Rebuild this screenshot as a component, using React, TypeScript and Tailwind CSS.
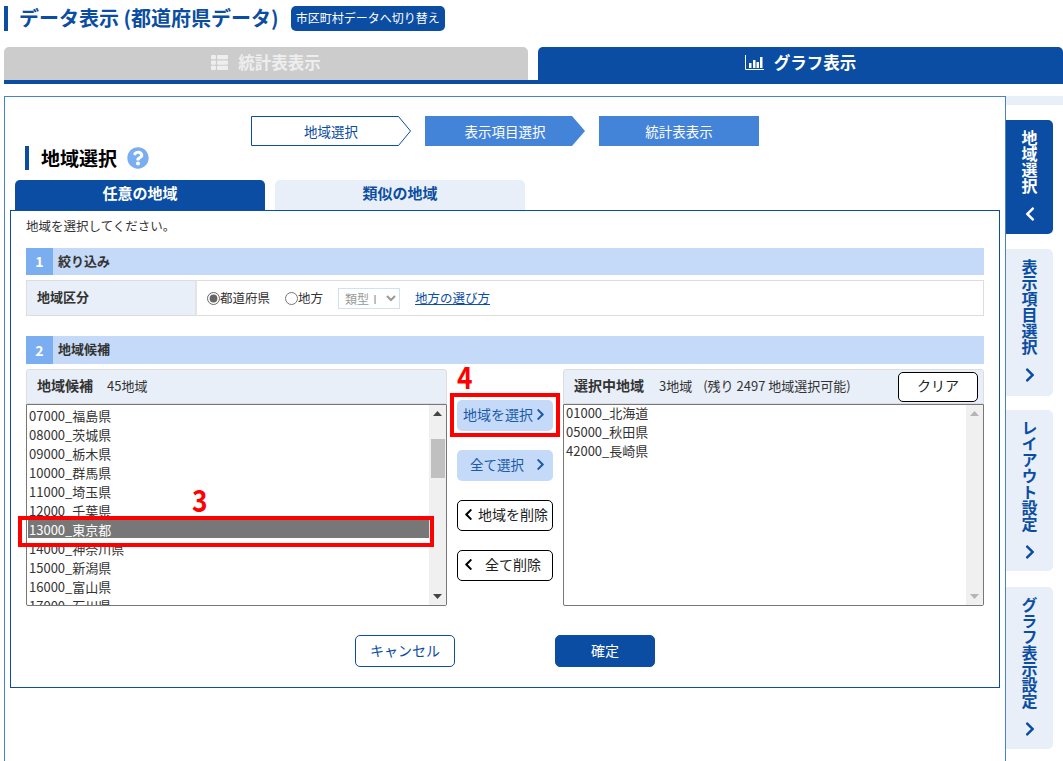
import { FaChevronLeft, FaChevronRight, FaQuestionCircle, FaThList } from "react-icons/fa";

const prefectures = [
  "07000_福島県",
  "08000_茨城県",
  "09000_栃木県",
  "10000_群馬県",
  "11000_埼玉県",
  "12000_千葉県",
  "13000_東京都",
  "14000_神奈川県",
  "15000_新潟県",
  "16000_富山県",
  "17000_石川県",
];

const selected = ["01000_北海道", "05000_秋田県", "42000_長崎県"];

const sideTabs = [
  { label: "地域選択", height: "h-[114px] mt-[15px]", active: true },
  { label: "表示項目選択", height: "h-[147px] mt-[15px]", active: false },
  { label: "レイアウト設定", height: "h-[161px] mt-[14px]", active: false },
  { label: "グラフ表示設定", height: "h-[162px] mt-[16px]", active: false },
];

function SectionBand({ num, title, className }: { num: string; title: string; className: string }) {
  return (
    <div className={`flex bg-[#c5daf8] ${className}`}>
      <div className="flex w-[27px] items-center justify-center bg-[#7aaef0] text-[14px] font-bold text-white">{num}</div>
      <div className="flex items-center pb-[2px] pl-[5px] text-[13px] font-bold text-[#333]">{title}</div>
    </div>
  );
}

function Scrollbar({ thumb }: { thumb?: boolean }) {
  const arrow = thumb ? "#444" : "#b5b5b5";
  return (
    <div className="relative flex w-[17px] shrink-0 flex-col items-center justify-between bg-[#f0f0f0] py-[6px]">
      <svg width="9" height="5" viewBox="0 0 9 5">
        <path d="M4.5 0 9 5H0z" fill={arrow} />
      </svg>
      {thumb && <div className="absolute top-[34px] h-[39px] w-[14px] bg-[#c0c0c0]" />}
      <svg width="9" height="5" viewBox="0 0 9 5">
        <path d="M0 0h9L4.5 5z" fill={arrow} />
      </svg>
    </div>
  );
}

function ListBox({ items, active, thumb, rowClass }: { items: string[]; active?: string; thumb?: boolean; rowClass: string }) {
  return (
    <div className="flex h-[202px] overflow-hidden rounded-b-[2px] border border-[#777] bg-white">
      <div className="flex-1 overflow-hidden pl-[1px] text-[13px] text-[#333]">
        {items.map((item) => (
          <div key={item} className={`h-[19px] pl-[1px] ${rowClass} ${item === active ? "bg-[#777] text-white" : ""}`}>
            {item}
          </div>
        ))}
      </div>
      <Scrollbar thumb={thumb} />
    </div>
  );
}

function Step({ label, arrow, outline }: { label: string; arrow?: boolean; outline?: boolean }) {
  return (
    <div className="relative flex h-[30px] w-[160px] items-center justify-center">
      <svg className="absolute inset-0" width="160" height="30" viewBox="0 0 160 30">
        {outline ? (
          <path d="M.5.5H147.5L159.5 15 147.5 29.5H.5z" fill="#fff" stroke="#0b4da2" />
        ) : (
          <path d={arrow ? "M0 0H147L160 15 147 30H0z" : "M0 0H160V30H0z"} fill="#4484d8" />
        )}
      </svg>
      <span className={`relative text-[13.5px] ${outline ? "text-[#0b4da2]" : "text-white"}`}>{label}</span>
    </div>
  );
}

export default function App() {
  return (
    <div className="relative h-[761px] w-[1063px] overflow-hidden bg-white font-['Noto_Sans_CJK_JP','Noto_Sans',sans-serif] text-[#333]">
      {/* title */}
      <div className="ml-[4px] flex h-[47px] items-start pt-[6px]">
        <div className="h-[25px] w-[4px] bg-[#0b4da2]" />
        <h1 className="ml-[11px] pb-[2px] text-[20px] leading-[23px] font-bold whitespace-nowrap text-[#0b4da2]">
          データ表示 (都道府県データ)
        </h1>
        <div className="ml-[12px] flex h-[25px] w-[154px] items-center justify-center rounded-[5px] bg-[#0b4da2] pb-[1px] text-[12px] whitespace-nowrap text-white">
          市区町村データへ切り替え
        </div>
      </div>

      {/* view tabs */}
      <div className="ml-[4px] flex h-[37px] items-start justify-between border-b-[4px] border-[#0b4da2]">
        <div className="flex h-[33px] w-[524px] items-center justify-center gap-[10px] rounded-t-[5px] bg-[#cccccc] pb-[2px] text-[16.5px] font-bold text-[#eeeeee]">
          <FaThList className="size-[17px]" />
          統計表表示
        </div>
        <div className="flex h-[37px] w-[525px] items-center justify-center gap-[10px] rounded-t-[5px] bg-[#0b4da2] pb-[6px] text-[16.5px] font-bold text-white">
          <svg width="19" height="15" viewBox="0 0 19 15" fill="none">
            <path d="M.5 0v14.5H19" stroke="#fff" />
            <path d="M4 8h2.5v5H4zM8 5h2.5v8H8zM11.5 7H14v6h-2.5zM15 2h2.5v11H15z" fill="#fff" />
          </svg>
          グラフ表示
        </div>
      </div>

      <div className="mt-[12px] flex">
        {/* main panel */}
        <div className="ml-[4px] h-[700px] w-[1002px] shrink-0 border border-[#4a80cc]">
          <div className="ml-[246px] flex gap-[14px] pt-[19px]">
            <Step label="地域選択" outline />
            <Step label="表示項目選択" arrow />
            <Step label="統計表表示" />
          </div>

          <div className="ml-[20px] flex h-[24px] items-center">
            <div className="h-[24px] w-[4px] bg-[#0b4da2]" />
            <h2 className="ml-[12px] text-[19px] font-bold text-black">地域選択</h2>
            <FaQuestionCircle className="ml-[10px] size-[22px] text-[#7aaef0]" />
          </div>

          <div className="mt-[10px] ml-[10px] flex gap-[10px]">
            <div className="flex h-[30px] w-[250px] items-center justify-center rounded-t-[5px] bg-[#0b4da2] pb-[3px] text-[15px] font-bold text-white">
              任意の地域
            </div>
            <div className="flex h-[30px] w-[250px] items-center justify-center rounded-t-[5px] bg-[#e8eff8] pb-[3px] text-[15px] font-bold text-[#0b4da2]">
              類似の地域
            </div>
          </div>

          <div className="ml-[5px] h-[478px] w-[990px] border border-[#0b4da2] px-[15px] pt-[6px]">
            <p className="h-[19px] text-[12.5px] leading-[18px]">地域を選択してください。</p>

            <SectionBand num="1" title="絞り込み" className="mt-[12px] h-[27px]" />
            <div className="mt-[5px] flex h-[36px] border border-[#dddddd] text-[12.5px]">
              <div className="flex w-[170px] items-center border-r-[2px] border-[#e4e4e4] bg-[#e8eff8] pb-[2px] pl-[10px] text-[13px] font-bold">
                地域区分
              </div>
              <div className="flex items-center pl-[10px]">
                <label className="flex items-center">
                  <input type="radio" name="area" defaultChecked className="m-0 size-[13px] accent-[#666]" />
                  都道府県
                </label>
                <label className="ml-[15px] flex items-center">
                  <input type="radio" name="area" className="m-0 size-[13px] accent-[#666]" />
                  地方
                </label>
                <select
                  disabled
                  className="ml-[15px] h-[21px] w-[62px] border border-[#d3e0f0] bg-white pl-[2px] text-[12px] text-[#999]"
                >
                  <option>類型Ⅰ</option>
                </select>
                <a href="#" className="ml-[15px] text-[#0b4da2] underline">
                  地方の選び方
                </a>
              </div>
            </div>

            <SectionBand num="2" title="地域候補" className="mt-[20px] h-[28px]" />

            <div className="mt-[5px] flex">
              <div className="w-[421px] shrink-0">
                <div className="flex h-[35px] items-center rounded-t-[3px] border border-[#dddddd] bg-[#e8eff8] pb-[2px] pl-[10px]">
                  <span className="text-[14px] font-bold">地域候補</span>
                  <span className="ml-[14px] text-[13px]">45地域</span>
                </div>
                <ListBox items={prefectures} active="13000_東京都" thumb rowClass="leading-[21px]" />
              </div>

              <div className="mx-[10px] flex w-[96px] shrink-0 flex-col gap-[19px] pt-[31px] text-[14px]">
                <div className="flex h-[31px] items-center justify-between rounded-[5px] bg-[#c5daf8] pr-[6px] pb-[2px] pl-[6px] whitespace-nowrap text-[#1a5aa8]">
                  地域を選択
                  <FaChevronRight className="size-[13px] shrink-0" />
                </div>
                <div className="flex h-[31px] items-center justify-between rounded-[5px] bg-[#c5daf8] pr-[6px] pb-[2px] pl-[13px] text-[13.5px] text-[#1a5aa8]">
                  全て選択
                  <FaChevronRight className="size-[13px] shrink-0" />
                </div>
                <div className="flex h-[31px] items-center gap-[3px] rounded-[5px] border border-black bg-white pb-[2px] pl-[4px] whitespace-nowrap text-[#222]">
                  <FaChevronLeft className="size-[13px] shrink-0 text-black" />
                  地域を削除
                </div>
                <div className="flex h-[31px] items-center gap-[10px] rounded-[5px] border border-black bg-white pb-[2px] pl-[4px] text-[#222]">
                  <FaChevronLeft className="size-[13px] shrink-0 text-black" />
                  全て削除
                </div>
              </div>

              <div className="w-[421px] shrink-0">
                <div className="flex h-[35px] items-center rounded-t-[3px] border border-[#dddddd] bg-[#e8eff8] pr-[5px] pl-[10px]">
                  <span className="pb-[2px] text-[14px] font-bold">選択中地域</span>
                  <span className="ml-[15px] pb-[2px] text-[13px]">3地域</span>
                  <span className="ml-[11px] pb-[2px] text-[13px]">(残り 2497 地域選択可能)</span>
                  <button className="ml-auto h-[30px] w-[80px] rounded-[5px] border border-black bg-white pb-[2px] text-[14px] text-[#222]">
                    クリア
                  </button>
                </div>
                <ListBox items={selected} rowClass="leading-[16px]" />
              </div>
            </div>

            <div className="mt-[29px] flex justify-center gap-[100px] text-[14px]">
              <button className="h-[32px] w-[100px] rounded-[5px] border border-[#0b4da2] bg-white pb-[2px] text-[#0b4da2]">
                キャンセル
              </button>
              <button className="h-[32px] w-[100px] rounded-[5px] border border-[#0b4da2] bg-[#0b4da2] pb-[2px] text-white">
                確定
              </button>
            </div>
          </div>
        </div>

        {/* side tabs */}
        <div className="flex-1">
          <div className="h-[9px] bg-[#e8eff8]" />
          {sideTabs.map((tab) => (
            <div
              key={tab.label}
              className={`flex w-[47px] flex-col items-center rounded-r-[5px] pt-[10px] text-[16px] font-bold ${tab.height} ${
                tab.active ? "bg-[#0b4da2] text-white" : "bg-[#e8eff8] text-[#0b4da2]"
              }`}
            >
              <span className="leading-[16px] [writing-mode:vertical-rl]">{tab.label}</span>
              {tab.active ? (
                <FaChevronLeft className="mt-[12px] size-[16px]" />
              ) : (
                <FaChevronRight className="mt-[12px] size-[16px]" />
              )}
            </div>
          ))}
        </div>
      </div>

      {/* red annotations */}
      <div className="absolute top-[516px] left-[18px] h-[31px] w-[416px] border-[4px] border-[#ff0000]" />
      <div className="absolute top-[393px] left-[450px] h-[44px] w-[110px] border-[4px] border-[#ff0000]" />
      <div className="absolute top-[481px] left-[192px] origin-left scale-x-[0.85] text-[31px] leading-[36px] font-bold text-[#ff0000]">3</div>
      <div className="absolute top-[358px] left-[457px] origin-left scale-x-[0.85] text-[31px] leading-[36px] font-bold text-[#ff0000]">4</div>
    </div>
  );
}
